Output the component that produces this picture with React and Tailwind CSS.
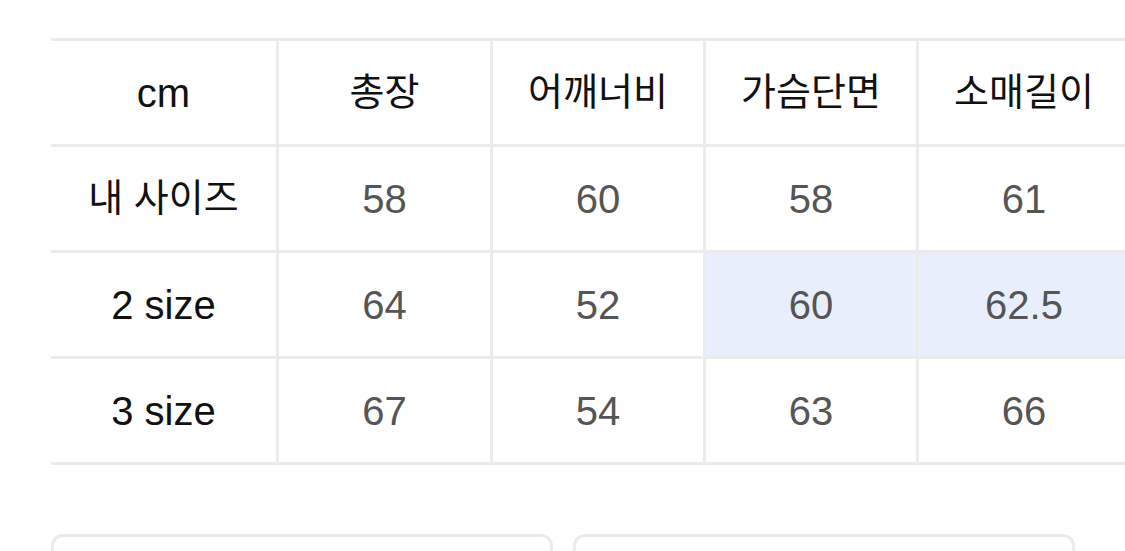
import React from "react";

const header = ["cm", "총장", "어깨너비", "가슴단면", "소매길이"];
const rows = [
  { label: "내 사이즈", values: ["58", "60", "58", "61"], hl: [] },
  { label: "2 size", values: ["64", "52", "60", "62.5"], hl: [2, 3] },
  { label: "3 size", values: ["67", "54", "63", "66"], hl: [] },
];

const font = { fontFamily: '"Liberation Sans", "Noto Sans CJK KR", sans-serif' };

const Cell = ({ children, first, highlight, className = "" }) => (
  <div
    className={`h-[106px] flex items-center justify-center border-b-[3px] border-[#ebebeb] ${
      first ? "" : "border-l-[3px]"
    } ${highlight ? "bg-[#e9eefc]" : "bg-white"} ${className}`}
  >
    {children}
  </div>
);

const App = () => {
  return (
    <div className="w-[1125px] h-[551px] overflow-hidden bg-white" style={font}>
      {/* Size table */}
      <div className="ml-[51px] mt-[38px] w-[1090px] border-t-[3px] border-[#ebebeb] grid grid-cols-[225px_214px_213px_213px_213px]">
        {header.map((h, i) => (
          <Cell key={h} first={i === 0}>
            <span className={i === 0 ? "text-[40px] text-[#111]" : "text-[38px] text-[#111]"}>{h}</span>
          </Cell>
        ))}
        {rows.map((r) => (
          <React.Fragment key={r.label}>
            <Cell first>
              <span className={r.label === "내 사이즈" ? "text-[38px] text-[#111]" : "text-[40px] text-[#111]"}>
                {r.label}
              </span>
            </Cell>
            {r.values.map((v, j) => (
              <Cell key={j} highlight={r.hl.includes(j)}>
                <span className="text-[40px] text-[#555]">{v}</span>
              </Cell>
            ))}
          </React.Fragment>
        ))}
      </div>

      {/* Bottom buttons */}
      <div className="ml-[51px] mt-[69px] flex gap-[20px]">
        <div className="w-[502px] h-[60px] rounded-[12px] border-[3px] border-[#ebebeb]" />
        <div className="w-[502px] h-[60px] rounded-[12px] border-[3px] border-[#ebebeb]" />
      </div>
    </div>
  );
};

export default App;
